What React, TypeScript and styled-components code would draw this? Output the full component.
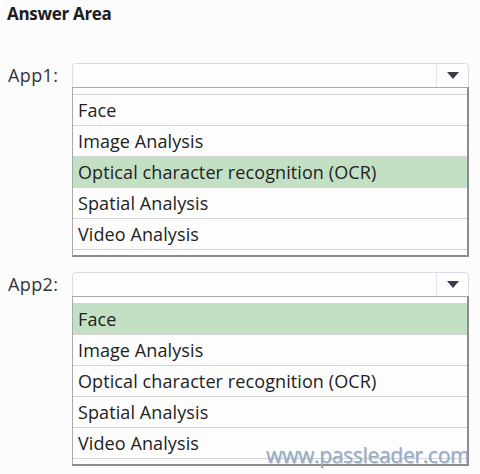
import styled, { createGlobalStyle } from "styled-components";

const GlobalStyle = createGlobalStyle`
    html, body {
        margin: 0;
        padding: 0;
        background: #fcfcfc;
    }
    body {
        font-family: "Open Sans", "Noto Sans", sans-serif;
        color: #222;
    }
`;

const Page = styled.main`
    position: relative;
    width: 480px;
    height: 474px;
    overflow: hidden;
    padding: 3px 0 0 0;
    box-sizing: border-box;
`;

const Title = styled.h2`
    margin: 0 0 38px 7px;
    font-size: 17px;
    line-height: 22px;
    font-weight: 700;
    letter-spacing: -0.3px;
    color: #1c1c1c;
`;

const Field = styled.section`
    display: grid;
    grid-template-columns: 72px 397px;
    align-items: start;
    margin-bottom: 15px;
`;

const Label = styled.span`
    padding-left: 8px;
    font-size: 18px;
    line-height: 24px;
    letter-spacing: 0.4px;
    color: #333;
`;

const Picker = styled.div`
    display: flex;
    flex-direction: column;
`;

const SelectBox = styled.div`
    height: 23px;
    display: flex;
    justify-content: flex-end;
    border: 1px solid #dcdce8;
    border-bottom: none;
    border-radius: 4px 4px 0 0;
    background: #fdfdfd;
`;

const ArrowButton = styled.div`
    width: 31px;
    display: flex;
    align-items: center;
    justify-content: center;
    border-left: 1px solid #e4e4ec;
`;

const List = styled.ul`
    list-style: none;
    margin: 0;
    padding: 6px 0 5px;
    border: 1px solid #a9a9a9;
    border-right: 2px solid #8c8c8c;
    border-bottom: 2px solid #8c8c8c;
    background: #fdfdfd;
`;

const Option = styled.li<{ $selected?: boolean }>`
    height: 30px;
    display: flex;
    align-items: center;
    padding-left: 5px;
    font-size: 18px;
    letter-spacing: 0.1px;
    color: #222;
    border-top: 1px solid #d4d4d4;
    background: ${props => (props.$selected ? "#c4e0c4" : "transparent")};
    &:last-child {
        border-bottom: 1px solid #d4d4d4;
    }
`;

const Watermark = styled.div`
    position: absolute;
    left: 266px;
    top: 443px;
    font-family: "Open Sans", sans-serif;
    font-size: 21px;
    line-height: 24px;
    color: #93aac8;
    text-shadow: 1px 1px 0 rgba(120, 120, 120, 0.3);
    letter-spacing: -0.3px;
`;

const options = [
    "Face",
    "Image Analysis",
    "Optical character recognition (OCR)",
    "Spatial Analysis",
    "Video Analysis",
];

function Arrow() {
    return (
        <svg width="14" height="9" viewBox="0 0 14 9">
            <path d="M1 1h12L7 8z" fill="#3a3a48" />
        </svg>
    );
}

function AppField({ label, selected }: { label: string; selected: number }) {
    return (
        <Field>
            <Label>{label}</Label>
            <Picker>
                <SelectBox>
                    <ArrowButton>
                        <Arrow />
                    </ArrowButton>
                </SelectBox>
                <List>
                    {options.map((o, i) => (
                        <Option key={o} $selected={i === selected}>
                            {o}
                        </Option>
                    ))}
                </List>
            </Picker>
        </Field>
    );
}

export default function App() {
    return (
        <Page>
            <GlobalStyle />
            <Title>Answer Area</Title>
            <AppField label="App1:" selected={2} />
            <AppField label="App2:" selected={0} />
            <Watermark>www.passleader.com</Watermark>
        </Page>
    );
}
